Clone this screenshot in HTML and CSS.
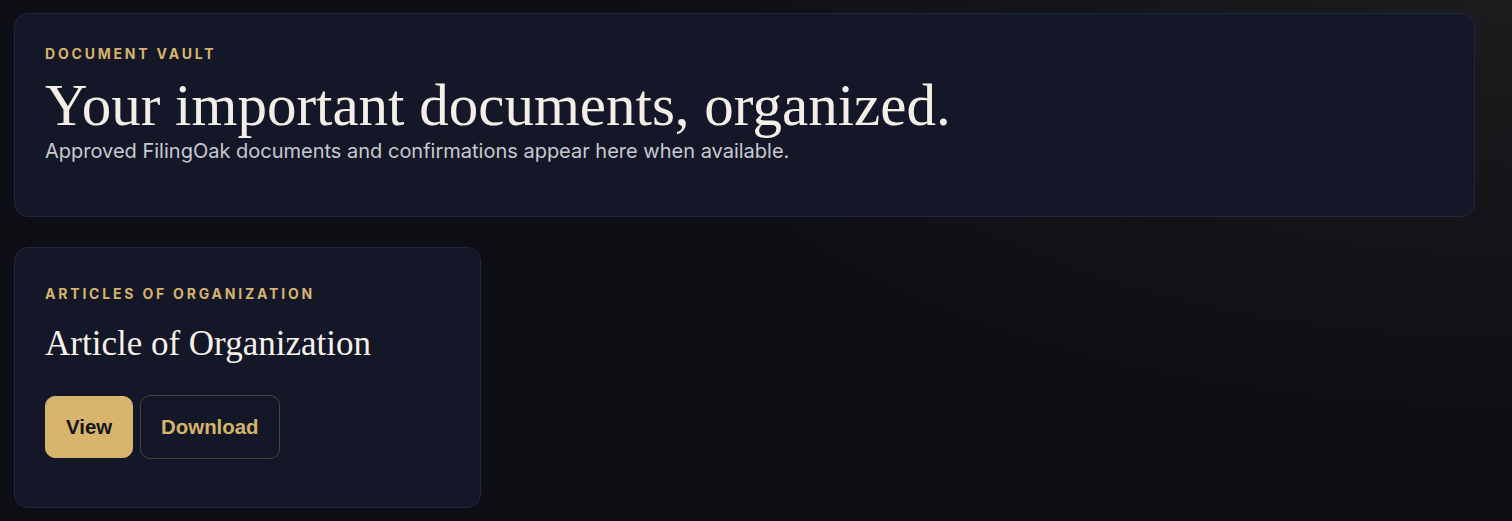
FILE: index.html
```html
<!DOCTYPE html>
<html lang="en">
<head>
    <meta charset="UTF-8">
    <meta name="viewport" content="width=device-width, initial-scale=1.0">
    <title>Document Vault</title>
    <link rel="stylesheet" href="styles.css">
</head>
<body>
    <main class="vault">
        <section class="vault-hero">
            <p class="eyebrow">Document Vault</p>
            <h1 class="hero-title">Your important documents, organized.</h1>
            <p class="hero-sub">Approved FilingOak documents and confirmations appear here when available.</p>
        </section>

        <div class="doc-grid">
            <article class="doc-card">
                <p class="eyebrow">Articles of Organization</p>
                <h2 class="doc-title">Article of Organization</h2>
                <div class="doc-actions">
                    <button class="btn btn-primary">View</button>
                    <button class="btn btn-outline">Download</button>
                </div>
            </article>
        </div>
    </main>
</body>
</html>
```

FILE: styles.css
```css
* {
    margin: 0;
    padding: 0;
    box-sizing: border-box;
}
html, body {
    height: 100%;
}
body {
    font-family: Inter, "Noto Sans", sans-serif;
    color: #f3efe6;
    background: radial-gradient(ellipse 900px 420px at 100% 0%, #1c1b1d 0%, rgba(28, 27, 29, 0) 100%), #0e0f15;
}
.vault {
    padding: 13px 37px 0 14px;
    display: flex;
    flex-direction: column;
    gap: 30px;
}
.vault-hero,
.doc-card {
    background: #141728;
    border: 1px solid #23273d;
    border-radius: 14px;
    padding: 30px;
}
.vault-hero {
    height: 204px;
    padding-top: 31px;
}
.eyebrow {
    font-size: 14px;
    font-weight: 700;
    letter-spacing: 2.8px;
    text-transform: uppercase;
    color: #d6b36b;
    line-height: 18px;
}
.hero-title {
    font-family: "Liberation Serif", "DejaVu Serif", serif;
    font-weight: 400;
    font-size: 59px;
    line-height: 64px;
    margin-top: 10px;
    color: #f3efe6;
}
.hero-sub {
    font-size: 20px;
    line-height: 24px;
    color: #c9c9cf;
    margin-top: 2px;
}
.doc-grid {
    display: grid;
    grid-template-columns: repeat(3, 1fr);
    gap: 30px;
}
.doc-card {
    height: 261px;
    padding-top: 37px;
}
.doc-title {
    font-family: "Liberation Serif", "DejaVu Serif", serif;
    font-weight: 400;
    font-size: 35px;
    line-height: 40px;
    margin-top: 21px;
    color: #f6f2ea;
}
.doc-actions {
    display: flex;
    gap: 7px;
    margin-top: 31px;
    align-items: center;
}
.btn {
    font-family: "Liberation Sans", Arial, sans-serif;
    font-size: 20.4px;
    font-weight: 700;
    height: 62px;
    padding: 0 20px;
    border-radius: 10px;
    cursor: pointer;
}
.btn-primary {
    background: #d6b46b;
    border: 1px solid #d6b46b;
    color: #15151a;
}
.btn-outline {
    height: 64px;
    background: transparent;
    border: 1px solid #4b4434;
    color: #d6b46b;
}
```
